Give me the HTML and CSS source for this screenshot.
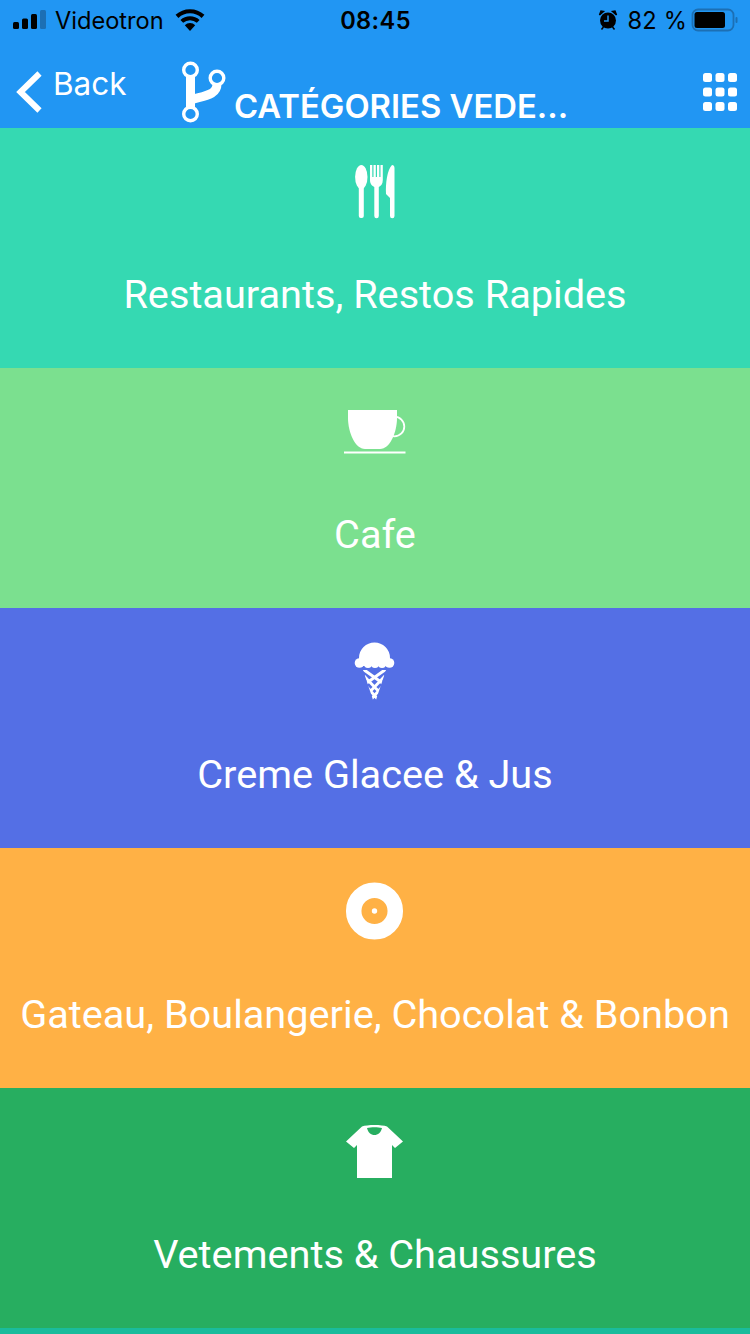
FILE: index.html
```html
<!DOCTYPE html>
<html lang="fr">
<head>
<meta charset="utf-8">
<title>Catégories vedettes</title>
<link rel="stylesheet" href="styles.css">
</head>
<body>
<header class="top">
  <div class="status">
    <div class="status-left">
      <svg class="signal" width="33" height="22" viewBox="0 0 33 22"><rect x="0" y="13" width="6" height="7" rx="1.500" fill="#000"/><rect x="9" y="9.500" width="6" height="10.500" rx="1.500" fill="#000"/><rect x="18" y="5" width="6" height="15" rx="1.500" fill="#000"/><rect x="27" y="1" width="6" height="19" rx="1.500" fill="#1c6fb4"/></svg>
      <span class="carrier">Videotron</span>
      <svg class="wifi" width="30" height="22" viewBox="0 0 30 22"><path d="M15 22 9.800 16.200A7.500 7.500 0 0 1 20.200 16.200Z" fill="#000"/><path d="M6.800 12.400A12 12 0 0 1 23.200 12.400" fill="none" stroke="#000" stroke-width="4"/><path d="M2 7.400A19 19 0 0 1 28 7.400" fill="none" stroke="#000" stroke-width="4.200"/></svg>
    </div>
    <div class="time">08:45</div>
    <div class="status-right">
      <svg class="alarm" width="20" height="22" viewBox="0 0 20 22"><circle cx="10" cy="11.500" r="8" fill="#000"/><path d="M10 6.500V12H6" fill="none" stroke="#2196f3" stroke-width="1.500"/><path d="M1.500 6 5.500 2.500 3 2ZM18.500 6 14.500 2.500 17 2Z" fill="#000" stroke="#000" stroke-width="1.500"/><path d="M3.500 20.500 5.500 18M16.500 20.500 14.500 18" stroke="#000" stroke-width="1.500"/></svg>
      <span class="percent">82 %</span>
      <svg class="battery" width="47" height="24" viewBox="0 0 47 24"><rect x="1.500" y="1.500" width="41" height="21" rx="5.500" fill="none" stroke="#1c6fb4" stroke-width="1.800"/><rect x="3.500" y="4" width="30.500" height="16" rx="2.500" fill="#000"/><rect x="44.500" y="9" width="2" height="6" rx="1" fill="#1c6fb4"/></svg>
    </div>
  </div>
  <nav class="nav">
    <div class="back">
      <svg width="28" height="44" viewBox="0 0 28 44"><path d="M25.500 3.500 6.500 22 25.500 40.500" fill="none" stroke="#fff" stroke-width="6"/></svg>
      <span class="back-label">Back</span>
    </div>
    <div class="heading">
      <svg class="fork" width="46" height="64" viewBox="0 0 46 64"><g fill="none" stroke="#fff"><circle cx="10.500" cy="10" r="6.800" stroke-width="3.400"/><circle cx="37" cy="18" r="6.800" stroke-width="3.400"/><circle cx="10.500" cy="54" r="6.800" stroke-width="3.400"/><path d="M10.500 16V48" stroke-width="9"/><path d="M37 24C37 35 25 35.500 10.500 40" stroke-width="9"/></g></svg>
      <span class="title">CATÉGORIES VEDE...</span>
    </div>
    <svg class="apps" width="34" height="38" viewBox="0 0 34 38"><g fill="#fff"><rect x="0" y="0" width="9" height="9" rx="2.500"/><rect x="12.500" y="0" width="9" height="9" rx="2.500"/><rect x="25" y="0" width="9" height="9" rx="2.500"/><rect x="0" y="14.500" width="9" height="9" rx="2.500"/><rect x="12.500" y="14.500" width="9" height="9" rx="2.500"/><rect x="25" y="14.500" width="9" height="9" rx="2.500"/><rect x="0" y="29" width="9" height="9" rx="2.500"/><rect x="12.500" y="29" width="9" height="9" rx="2.500"/><rect x="25" y="29" width="9" height="9" rx="2.500"/></g></svg>
  </nav>
</header>
<main>
  <section class="row row-teal">
    <svg class="icon" width="70" height="70" viewBox="340 156 70 70"><g fill="#fff"><ellipse cx="361.300" cy="177" rx="6.200" ry="12"/><rect x="358.800" y="180" width="5" height="38" rx="2"/><path d="M370 165h2.300v12h1.200v-12h2.300v12h1.200v-12h2.300v12h1.200v-12h2.300v15c0 4-2 6-4 7v29a2.200 2.200 0 0 1-4.500 0v-29c-2-1-4.300-3-4.300-7Z"/><path d="M392 165c1.500 0 2.500 1 2.500 3v48a2.200 2.200 0 0 1-4.500 0v-18l-4-4c-.5-10 1-24 6-29Z"/></g></svg>
    <span class="label">Restaurants, Restos Rapides</span>
  </section>
  <section class="row row-green">
    <svg class="icon" width="70" height="70" viewBox="340 396 70 70"><path d="M348 410h49v8c0 14-7 31-17 31h-15c-10 0-17-17-17-31Z" fill="#fff"/><circle cx="394.500" cy="426.500" r="9.800" fill="none" stroke="#fff" stroke-width="1.800"/><rect x="344" y="451.500" width="61.500" height="2" fill="#fff"/></svg>
    <span class="label">Cafe</span>
  </section>
  <section class="row row-blue">
    <svg class="icon" width="70" height="70" viewBox="340 636 70 70">
      <defs><clipPath id="cone"><path d="M363 670H386L375.800 700.500H373.200Z"/></clipPath></defs>
      <g fill="#fff"><path d="M359 658a15.500 15.500 0 0 1 31 0v8H359Z"/><circle cx="359.500" cy="663" r="4.800"/><circle cx="389.500" cy="663" r="4.800"/><circle cx="368" cy="664" r="4"/><circle cx="375" cy="664" r="4"/><circle cx="382" cy="664" r="4"/></g>
      <g clip-path="url(#cone)" fill="none" stroke="#fff" stroke-width="3"><path d="M360 667 388 687M389 667 361 687M364 676 385 698M385 676 364 698M366 686 383 705M383 686 366 705"/></g>
    </svg>
    <span class="label">Creme Glacee &amp; Jus</span>
  </section>
  <section class="row row-orange">
    <svg class="icon" width="70" height="70" viewBox="340 876 70 70"><circle cx="374.500" cy="911" r="20.800" fill="none" stroke="#fff" stroke-width="15.500"/><circle cx="374.500" cy="911" r="2.700" fill="#fff"/></svg>
    <span class="label">Gateau, Boulangerie, Chocolat &amp; Bonbon</span>
  </section>
  <section class="row row-emerald">
    <svg class="icon" width="70" height="70" viewBox="340 1116 70 70"><path fill-rule="evenodd" d="M362 1126.500C367 1124.500 382 1124.500 387 1126.500L403 1141.500 395 1148 392 1145V1178H357V1145L354 1148 346 1141.500ZM367 1128C368 1132.500 371 1135 374.500 1135S381 1132.500 382 1128C378 1127 371 1127 367 1128Z" fill="#fff"/></svg>
    <span class="label">Vetements &amp; Chaussures</span>
  </section>
  <div class="row-peek"></div>
</main>
</body>
</html>
```
FILE: styles.css
```css
html, body {
  margin: 0;
  padding: 0;
}
body {
  width: 750px;
  height: 1334px;
  overflow: hidden;
  font-family: Roboto, "Liberation Sans", sans-serif;
  color: #fff;
  background: #1abc9c;
}
svg {
  display: block;
  flex: none;
}
.top {
  height: 128px;
  background: #2196f3;
  overflow: hidden;
}
.status {
  display: grid;
  grid-template-columns: 1fr auto 1fr;
  align-items: center;
  height: 40px;
  padding: 0 12px 0 13px;
  color: #000;
  font-family: Inter, "Liberation Sans", sans-serif;
  font-size: 23.600px;
}
.status-left, .status-right {
  display: flex;
  align-items: center;
}
.status-right {
  justify-content: flex-end;
}
.carrier {
  margin-left: 9px;
}
.wifi {
  margin-left: 11px;
}
.time {
  font-weight: 600;
  letter-spacing: 0.400px;
}
.percent {
  margin-left: 9px;
  letter-spacing: 0.200px;
}
.battery {
  margin-left: 4px;
}
.nav {
  display: flex;
  align-items: flex-start;
  height: 88px;
  padding: 0 13px 0 14px;
}
.back {
  display: flex;
  align-items: center;
  margin-top: 30px;
  width: 166px;
}
.back-label {
  margin-left: 11px;
  margin-top: -18px;
  font-family: Inter, "Liberation Sans", sans-serif;
  font-size: 31.500px;
}
.heading {
  display: flex;
  align-items: flex-end;
  flex: 1;
  height: 86px;
}
.fork {
  align-self: flex-start;
  margin-top: 20px;
}
.title {
  margin-left: 8px;
  font-family: Inter, "Liberation Sans", sans-serif;
  font-size: 32.800px;
  font-weight: 600;
  line-height: 40px;
  white-space: nowrap;
}
.apps {
  margin-top: 33px;
}
.row {
  display: flex;
  flex-direction: column;
  align-items: center;
  height: 240px;
  padding-top: 28px;
  box-sizing: border-box;
}
.label {
  margin-top: 44px;
  font-size: 39.700px;
  line-height: 50px;
  white-space: nowrap;
}
.row-teal { background: #35d9b2; }
.row-green { background: #7be08f; }
.row-blue { background: #546fe5; }
.row-orange { background: #ffb145; }
.row-emerald { background: #27ae60; }
.row-peek {
  height: 6px;
  background: #1abc9c;
}
```
